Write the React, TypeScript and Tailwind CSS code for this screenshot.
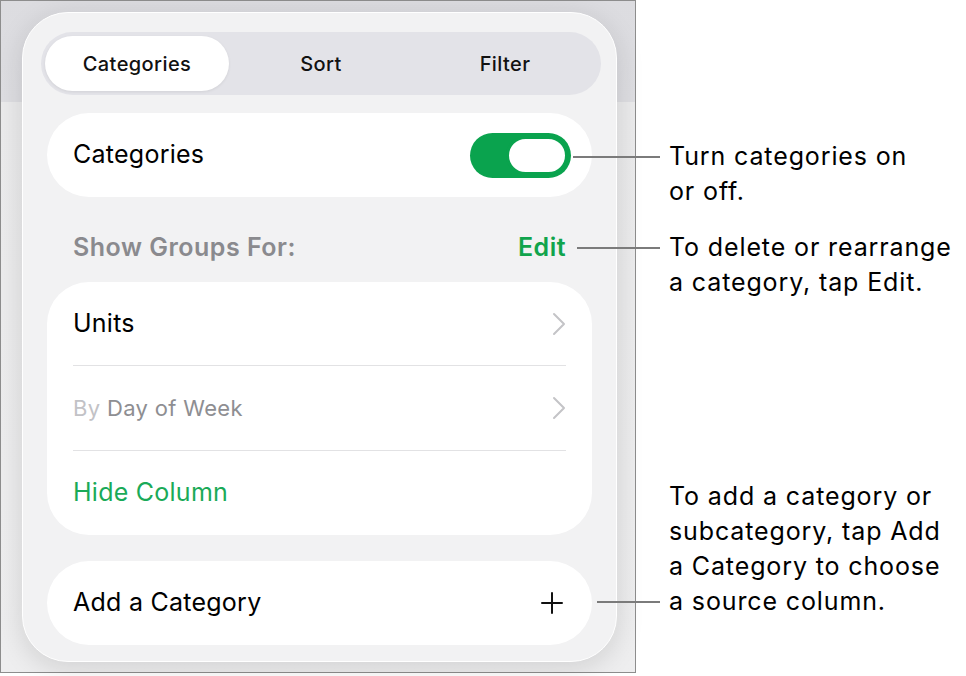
import type { ReactNode } from "react"

const FONT = { fontFamily: "Inter, 'Noto Sans', sans-serif" }

function Chevron() {
	return (
		<svg width="14" height="24" viewBox="0 0 14 24" fill="none" className="shrink-0">
			<path d="M2 2 L12 12 L2 22" stroke="#c4c4c7" strokeWidth="2" strokeLinecap="round" strokeLinejoin="round" />
		</svg>
	)
}

function Plus() {
	return (
		<svg width="24" height="24" viewBox="0 0 24 24" fill="none" className="shrink-0">
			<path d="M12 2 V22 M2 12 H22" stroke="#111" strokeWidth="2" strokeLinecap="round" />
		</svg>
	)
}

function Toggle() {
	return (
		<div className="flex h-[45px] w-[101px] items-center justify-end rounded-full bg-[#0aa34e] p-[3px]">
			<div className="h-[39px] w-[62px] rounded-full border-[3px] border-[#0aa34e] bg-white" />
		</div>
	)
}

// leader line sits on the callout's line number `row`, reaching back towards the panel
function Callout({ line, row = 0, children }: { line: number; row?: number; children: ReactNode }) {
	return (
		<div className="relative text-[25px] leading-[35px] tracking-[0.035em] text-black">
			<div
				className="absolute h-[2px] bg-[#7b7b7b]"
				style={{ left: -(line + 9), width: line, top: row * 35 + 17 }}
			/>
			{children}
		</div>
	)
}

export default function App() {
	return (
		<div className="flex h-[676px] w-[966px] bg-white" style={FONT}>
			{/* Screenshot frame */}
			<div className="h-[673px] w-[636px] shrink-0 border border-[#8d8d8d] bg-[linear-gradient(to_bottom,#dcdce0_0,#dedee2_101px,#ebebec_101px,#eeeeef_100%)] pl-[21px] pt-[11px]">
				<div className="flex h-[650px] w-[595px] flex-col rounded-[46px] border border-white bg-[#f2f2f3] px-[24px] pt-[19px] shadow-[0_6px_28px_rgba(0,0,0,0.13)]">
					{/* Segmented control */}
					<div className="-ml-[6px] grid h-[63px] w-[560px] grid-cols-3 rounded-full bg-[#e3e3e8] p-[4px] text-[20px] font-medium tracking-[0.02em] text-[#111]">
						<div className="flex items-center justify-center rounded-full bg-white shadow-[0_1px_3px_rgba(0,0,0,0.08)]">Categories</div>
						<div className="flex items-center justify-center">Sort</div>
						<div className="flex items-center justify-center">Filter</div>
					</div>

					{/* Categories switch */}
					<div className="mt-[18px] flex h-[84px] items-center justify-between rounded-[42px] bg-white pl-[26px] pr-[21px]">
						<span className="text-[25px] tracking-[0.01em] text-black">Categories</span>
						<Toggle />
					</div>

					{/* Section header */}
					<div className="flex items-center justify-between px-[26px] pb-[21px] pt-[36px] text-[25px] font-semibold leading-[28px] tracking-[0.02em]">
						<span className="text-[#8a8a8e]">Show Groups For:</span>
						<span className="text-[#10a44c]">Edit</span>
					</div>

					{/* Group list */}
					<div className="flex flex-col rounded-[42px] bg-white">
						<div className="flex h-[83px] items-center justify-between px-[26px] text-[25px] tracking-[0.01em] text-black">
							<span>Units</span>
							<Chevron />
						</div>
						<div className="mx-[26px] h-px bg-[#e2e2e4]" />
						<div className="flex h-[84px] items-center justify-between px-[26px] text-[22px] tracking-[0.015em]">
							<span>
								<span className="text-[#c2c2c6]">By</span> <span className="text-[#8e8e92]">Day of Week</span>
							</span>
							<Chevron />
						</div>
						<div className="mx-[26px] h-px bg-[#e2e2e4]" />
						<div className="flex h-[84px] items-center px-[26px] text-[25px] tracking-[0.01em] text-[#1aaa58]">Hide Column</div>
					</div>

					{/* Add category */}
					<div className="mt-[26px] flex h-[84px] items-center justify-between rounded-[42px] bg-white pl-[26px] pr-[28px] text-[25px] tracking-[0.01em] text-black">
						<span>Add a Category</span>
						<Plus />
					</div>
				</div>
			</div>

			{/* Callouts */}
			<div className="flex flex-1 flex-col pl-[33px] pt-[139px]">
				<Callout line={87}>
					Turn categories on
					<br />
					or off.
				</Callout>
				<div className="mt-[21px]">
					<Callout line={83}>
						To delete or rearrange
						<br />
						a category, tap Edit.
					</Callout>
				</div>
				<div className="mt-[179px]">
					<Callout line={63} row={3}>
						To add a category or
						<br />
						subcategory, tap Add
						<br />
						a Category to choose
						<br />a source column.
					</Callout>
				</div>
			</div>
		</div>
	)
}
